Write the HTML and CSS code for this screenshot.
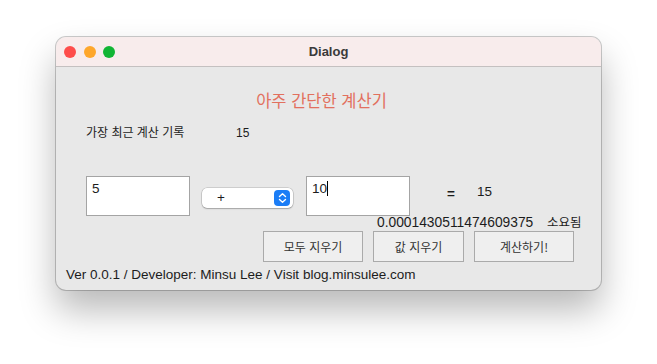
FILE: index.html
```html
<!DOCTYPE html>
<html lang="ko">
  <head>
    <title>Dialog</title>
    <link rel="stylesheet" href="styles.css">
  </head>
  <body>
    <div class="window">
      <!-- title bar with the three window buttons -->
      <div class="titlebar">
        <div class="lights">
          <span class="light red"></span>
          <span class="light yellow"></span>
          <span class="light green"></span>
        </div>
        <div class="title">Dialog</div>
        <div class="spacer"></div>
      </div>
      <div class="content">
        <h1 class="heading">아주 간단한 계산기</h1>
        <div class="history">
          <span class="history-label">가장 최근 계산 기록</span>
          <span>15</span>
        </div>
        <!-- operand boxes, operator and result -->
        <div class="calc-row">
          <div class="num-box">5</div>
          <div class="op-select">
            <span class="op-value">+</span>
            <span class="op-arrows">
              <svg width="9" height="12" viewBox="0 0 9 12"><path d="M1.5 4.5 L4.5 1.8 L7.5 4.5 M1.5 7.5 L4.5 10.2 L7.5 7.5" fill="none" stroke="#fff" stroke-width="1.4" stroke-linecap="round" stroke-linejoin="round"/></svg>
            </span>
          </div>
          <div class="num-box">10<span class="caret"></span></div>
          <span class="equals">=</span>
          <span class="result">15</span>
        </div>
        <div class="timing">
          <span class="time-value">0.0001430511474609375</span>
          <span class="time-unit">소요됨</span>
        </div>
        <div class="buttons">
          <button class="btn btn-wide">모두 지우기</button>
          <button class="btn btn-mid">값 지우기</button>
          <button class="btn btn-wide">계산하기!</button>
        </div>
        <div class="footer">Ver 0.0.1 / Developer: Minsu Lee / Visit blog.minsulee.com</div>
      </div>
    </div>
  </body>
</html>
```

FILE: styles.css
```css
body {
  margin: 0;
  min-height: 364px;
  background-color: #ffffff;
  font-family: "Liberation Sans", "Noto Sans CJK KR", sans-serif;
  color: #1c1c1c;
}

.window {
  margin: 37px 0 0 56px;
  width: 545px;
  height: 253px;
  border-radius: 10px;
  overflow: hidden;
  box-shadow: 0 0 0 1px rgba(0, 0, 0, 0.2), 0 20px 36px rgba(0, 0, 0, 0.28);
  background-color: #e8e8e8;
}

.titlebar {
  display: flex;
  align-items: center;
  height: 29px;
  background-color: #f8ecec;
  border-bottom: 1px solid #c4c0c0;
}

.lights {
  display: flex;
  gap: 7.5px;
  width: 60px;
  padding-left: 8px;
}

.light {
  width: 12px;
  height: 12px;
  border-radius: 50%;
}
.red { background-color: #fe4d4b; }
.yellow { background-color: #fea72b; }
.green { background-color: #11b534; }

.title {
  flex: 1;
  text-align: center;
  font-size: 13px;
  font-weight: bold;
  color: #3a3a3a;
}

.spacer {
  width: 68px;
}

.content {
  display: flex;
  flex-direction: column;
}

.heading {
  margin: 23px 0 0 0;
  padding-right: 14px;
  text-align: center;
  font-size: 16.5px;
  line-height: 20px;
  font-weight: normal;
  color: #e2705e;
  font-family: "Noto Sans CJK KR", sans-serif;
}

.history {
  display: flex;
  margin: 15px 0 0 30px;
  font-size: 12px;
  line-height: 16px;
}

.history-label {
  width: 150px;
}

.calc-row {
  display: flex;
  align-items: center;
  margin: 35px 0 0 30px;
  font-size: 13.5px;
}

.num-box {
  box-sizing: border-box;
  width: 104px;
  height: 40px;
  padding: 4px 5px;
  background-color: #ffffff;
  border: 1px solid #a4a4a4;
  line-height: 16px;
  align-self: flex-start;
}

.caret {
  display: inline-block;
  width: 1px;
  height: 15px;
  background-color: #000;
  vertical-align: -3px;
}

.op-select {
  display: flex;
  align-items: center;
  justify-content: space-between;
  box-sizing: border-box;
  width: 91px;
  height: 20px;
  margin: 3px 13px 0 12px;
  padding: 0 3px 0 15px;
  background-color: #ffffff;
  border-radius: 5px;
  box-shadow: 0 0 0 0.5px rgba(0, 0, 0, 0.22), 0 1px 1.5px rgba(0, 0, 0, 0.2);
}

.op-arrows {
  display: flex;
  align-items: center;
  justify-content: center;
  width: 16px;
  height: 16px;
  border-radius: 4px;
  background-color: #1b7df6;
}

.equals {
  margin: -6px 0 0 37px;
  width: 30px;
  font-weight: bold;
}

.result {
  margin-top: -10px;
}

.timing {
  display: flex;
  align-items: baseline;
  margin: 0 0 0 321px;
  font-size: 13.8px;
  line-height: 14px;
}

.time-value {
  width: 170px;
}

.time-unit {
  font-size: 12.5px;
}

.buttons {
  display: flex;
  gap: 10px;
  margin: 1px 0 0 207px;
}

.btn {
  height: 31px;
  background-color: #efefef;
  border: 1px solid #aaaaaa;
  border-radius: 0;
  font-family: "Noto Sans CJK KR", sans-serif;
  font-size: 12px;
  color: #333;
}

.btn-wide {
  width: 100px;
}

.btn-mid {
  width: 91px;
}

.footer {
  margin: 5px 0 0 10px;
  font-size: 13.5px;
  line-height: 16px;
}
```
